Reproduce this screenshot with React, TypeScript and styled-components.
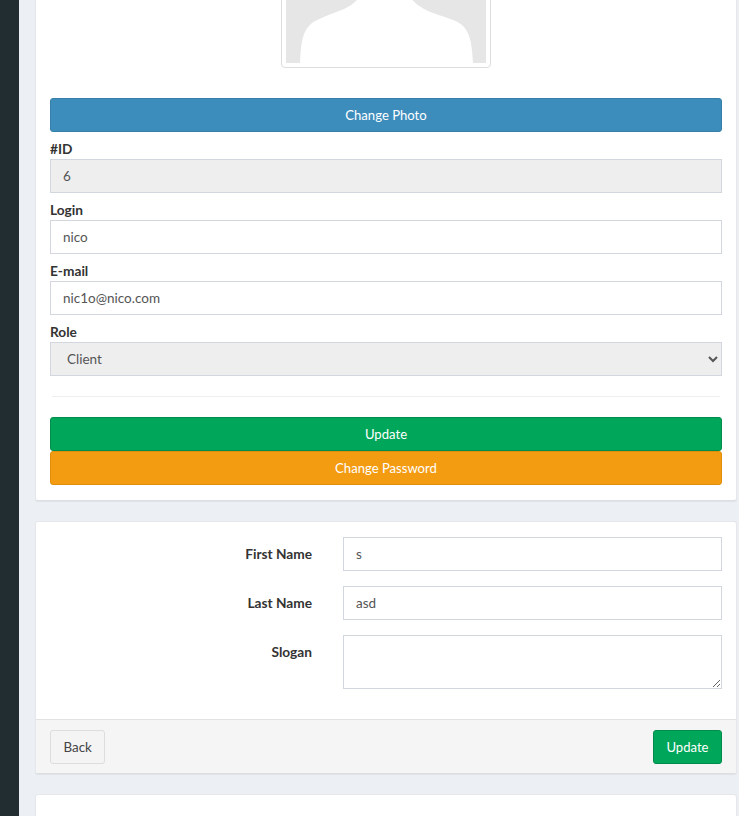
import React from 'react';
import styled, { createGlobalStyle } from 'styled-components';

const GlobalStyle = createGlobalStyle`
    html, body {
        margin: 0;
        height: 816px;
        overflow: hidden;
        background: #ecf0f5;
        font-family: "Lato", "Liberation Sans", sans-serif;
        font-size: 14px;
        color: #333;
    }
    * { box-sizing: border-box; }
`;

const Page = styled.div`
    display: flex;
    height: 816px;
    overflow: hidden;
`;

const Sidebar = styled.aside`
    flex: 0 0 19px;
    background: #222d32;
`;

const Content = styled.main`
    flex: 1;
    min-width: 0;
    padding: 0 2px 0 16px;
    margin-top: -157px;
`;

const Card = styled.section`
    background: #fff;
    border-radius: 3px;
    border: 1px solid #e6e7ea;
    border-bottom-color: #dcdee1;
    box-shadow: 0 1px 1px rgba(0, 0, 0, .06);
    margin-bottom: 20px;
`;

const CardBody = styled.div`
    padding: 14px 14px 15px;
`;

const PhotoFrame = styled.div`
    width: 210px;
    height: 210px;
    margin: 0 auto 30px;
    padding: 4px;
    border: 1px solid #ddd;
    border-radius: 4px;
    background: #fff;
`;

const PhotoArt = styled.svg`
    display: block;
    width: 200px;
    height: 200px;
`;

const Button = styled.button<{ $tone: string; $edge: string; $block?: boolean }>`
    display: ${p => p.$block ? 'block' : 'inline-block'};
    width: ${p => p.$block ? '100%' : 'auto'};
    height: 34px;
    padding: 0 12.5px 1px;
    border: 1px solid ${p => p.$edge};
    border-radius: 3px;
    background: ${p => p.$tone};
    color: #fff;
    font-family: inherit;
    font-size: 13.1px;
`;

const BackButton = styled(Button)`
    color: #444;
    font-size: 13.4px;
`;

const Label = styled.label`
    display: block;
    padding-top: 7px;
    line-height: 20px;
    font-size: 13.7px;
    font-weight: 700;
`;

const Field = styled.input<{ $off?: boolean }>`
    display: block;
    width: 100%;
    height: 34px;
    padding: 0 12px 1px;
    border: 1px solid #d2d6de;
    background: ${p => p.$off ? '#eee' : '#fff'};
    color: #555;
    font-family: inherit;
    font-size: 13.5px;
    outline: none;
`;

const RoleSelect = styled.select`
    display: block;
    width: 100%;
    height: 34px;
    padding: 0 12px 1px;
    border: 1px solid #d2d6de;
    background: #eee;
    color: #555;
    font-family: inherit;
    font-size: 13.5px;
    opacity: 1;
`;

const Divider = styled.hr`
    height: 1px;
    margin: 20px 2px;
    border: 0;
    background: #eee;
`;

const FormRows = styled.div`
    display: flex;
    flex-direction: column;
    gap: 15px;
    padding: 15px 14px 30px;
`;

const FormRow = styled.div`
    display: grid;
    grid-template-columns: 262px 1fr;
    column-gap: 31px;
    align-items: start;
`;

const RowLabel = styled(Label)`
    text-align: right;
`;

const Slogan = styled.textarea`
    display: block;
    width: 100%;
    height: 54px;
    padding: 6px 12px;
    border: 1px solid #d2d6de;
    outline: none;
`;

const CardFooter = styled.footer`
    display: flex;
    justify-content: space-between;
    padding: 10px 14px 9px;
    background: #f5f5f5;
    border-top: 1px solid #e2e2e2;
`;

function Photo()
{
    return (
        <PhotoArt viewBox="0 0 200 200">
            <rect width="200" height="200" fill="#e6e6e6" />
            <ellipse cx="100" cy="70" rx="46" ry="62" fill="#fff" />
            <path
                d="M14 200 C15 180 16 168 26 160 C33 155 46 151 58 146 C66 142 72 138 75 130 L122 130 C125 138 134 145 147 150 C160 155 172 157 178 164 C185 172 186 184 187 200 Z"
                fill="#fff"
            />
        </PhotoArt>
    );
}

export default function App()
{
    return (
        <Page>
            <GlobalStyle />
            <Sidebar />
            <Content>
                <Card>
                    <CardBody>
                        <PhotoFrame><Photo /></PhotoFrame>
                        <Button $block $tone="#3c8dbc" $edge="#367fa9">Change Photo</Button>

                        <Label>#ID</Label>
                        <Field $off readOnly value="6" />

                        <Label>Login</Label>
                        <Field readOnly value="nico" />

                        <Label>E-mail</Label>
                        <Field readOnly value="nic1o@nico.com" />

                        <Label>Role</Label>
                        <RoleSelect defaultValue="client">
                            <option value="client">Client</option>
                        </RoleSelect>

                        <Divider />

                        <Button $block $tone="#00a65a" $edge="#008d4c">Update</Button>
                        <Button $block $tone="#f39c12" $edge="#e08e0b">Change Password</Button>
                    </CardBody>
                </Card>

                <Card>
                    <FormRows>
                        <FormRow>
                            <RowLabel>First Name</RowLabel>
                            <Field readOnly value="s" />
                        </FormRow>
                        <FormRow>
                            <RowLabel>Last Name</RowLabel>
                            <Field readOnly value="asd" />
                        </FormRow>
                        <FormRow>
                            <RowLabel>Slogan</RowLabel>
                            <Slogan readOnly />
                        </FormRow>
                    </FormRows>
                    <CardFooter>
                        <BackButton $tone="#f4f4f4" $edge="#ddd">Back</BackButton>
                        <Button $tone="#00a65a" $edge="#008d4c">Update</Button>
                    </CardFooter>
                </Card>

                <Card>
                    <CardBody />
                </Card>
            </Content>
        </Page>
    );
}
